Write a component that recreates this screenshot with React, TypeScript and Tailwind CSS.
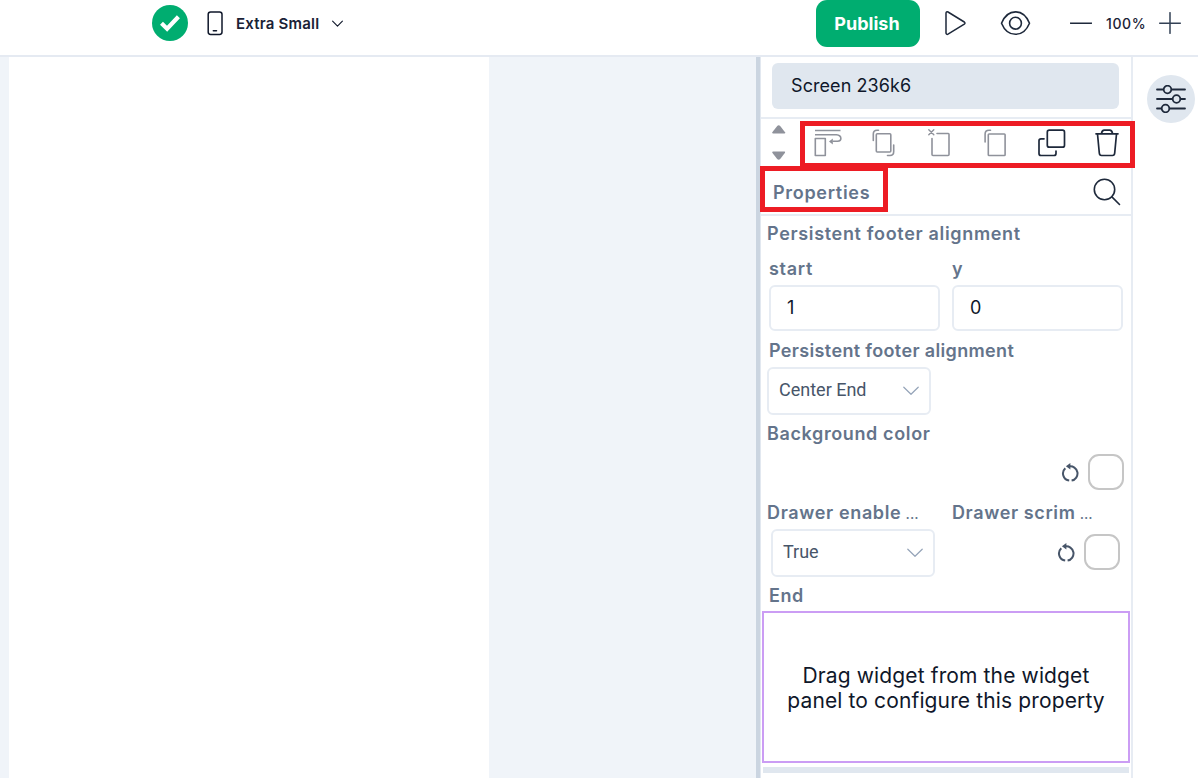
import React from "react";

type IconProps = { className?: string; children: React.ReactNode; w: number; h: number; sw?: number };

function Icon({ className = "", children, w, h, sw = 1.6 }: IconProps) {
  return (
    <svg
      className={`block shrink-0 ${className}`}
      width={w}
      height={h}
      viewBox={`0 0 ${w} ${h}`}
      fill="none"
      stroke="currentColor"
      strokeWidth={sw}
      strokeLinecap="round"
      strokeLinejoin="round"
    >
      {children}
    </svg>
  );
}

function Header() {
  return (
    <header className="flex h-[57px] shrink-0 items-start border-b-2 border-[#e5eaf2] bg-white">
      <div className="flex h-[55px] w-full items-start">
        <Icon w={36} h={36} className="mt-[5px] ml-[152px]">
          <circle cx="18" cy="18" r="18" fill="#00ad70" stroke="none" />
          <path d="M9.5 18.3l5.6 5.4L26.4 11.8" stroke="#fff" strokeWidth="4.2" strokeLinecap="butt" strokeLinejoin="miter" />
        </Icon>
        <Icon w={16} h={25} className="mt-[11px] ml-[19px] text-[#0f172a]" sw={1.5}>
          <rect x="1.2" y="0.9" width="13.8" height="22.6" rx="2.4" />
          <path d="M6.3 19.7h3.2" />
        </Icon>
        <span className="mt-[11px] ml-[13px] w-[84px] text-[15px] leading-[25px] font-semibold tracking-[0.2px] whitespace-nowrap text-[#1a2236]">
          Extra Small
        </span>
        <Icon w={12} h={8} className="mt-[20px] ml-[12px] text-[#0f172a]" sw={1.1}>
          <path d="M0.600 1.200l4.900 4.900L10.400 1.200" />
        </Icon>
        <button className="ml-[472px] h-[46.500px] w-[103.500px] rounded-[11px] bg-[#00ad70] pr-[1.500px] text-[18px] leading-[48px] font-bold whitespace-nowrap text-white">
          Publish
        </button>
        <Icon w={22} h={26} className="mt-[10px] ml-[24.500px] text-[#1e293b]" sw={1.5}>
          <path d="M2 3.200C2 2 3 1.400 4 2L20.300 12Q21.600 13.200 20.300 14.200L4 24.200C3 24.700 2 24.100 2 23Z" />
        </Icon>
        <Icon w={32} h={26} className="mt-[10px] ml-[34px] text-[#1e293b]" sw={1.6}>
          <path d="M1.500 13.200C4.300 6.500 9 1.900 15.500 1.900S26.700 6.500 29.500 13.200C26.700 20 22 24.300 15.500 24.300S4.300 20 1.500 13.200Z" />
          <circle cx="15.500" cy="13.200" r="5.900" />
        </Icon>
        <Icon w={22} h={22} className="mt-[12px] ml-[38px] text-[#1e293b]" sw={1.5}>
          <path d="M0.500 11.200h21" />
        </Icon>
        <span className="mt-[11px] ml-[14px] w-[40px] text-[14px] leading-[25px] font-medium tracking-[0.6px] whitespace-nowrap text-[#1a2236]">
          100%
        </span>
        <Icon w={22} h={22} className="mt-[12px] ml-[13px] text-[#334155]" sw={1.5}>
          <path d="M0.700 11.200h20.600M11 0.700v20.600" />
        </Icon>
      </div>
    </header>
  );
}

function Toolbar() {
  return (
    <div className="flex h-[48px] items-start text-[#8f929b]">
      <svg className="mt-[5px] ml-[11px] block shrink-0" width="14" height="37" viewBox="0 0 14 37" fill="currentColor">
        <path d="M0.300 8.200Q0 9.500 1.200 9.500H12.300Q13.600 9.500 13 8.200L8.200 2Q6.700 0.600 5.200 2Z" />
        <path d="M0.300 28.800Q0 27.500 1.200 27.500H12.300Q13.600 27.500 13 28.800L8.200 35Q6.700 36.400 5.200 35Z" />
      </svg>
      <Icon w={28} h={28} className="mt-[10px] ml-[28px]">
        <path d="M1 1.500H26.500M1 5.800H22.500C28.300 6.500 28 12 23.500 12.300H18.500" strokeLinecap="butt" />
        <path d="M18.800 9.500v6L15 12.400Z" fill="currentColor" stroke="none" />
        <rect x="1.300" y="9.500" width="10" height="17" />
      </Icon>
      <Icon w={24} h={28} className="mt-[10px] ml-[30px]">
        <path d="M6.500 1.200H5Q1.300 1.200 1.300 5V11.500" />
        <rect x="4.300" y="4.800" width="14.500" height="18.200" rx="1" />
        <path d="M21.700 16v6.500Q21.700 26.500 18 26.500H15.500" />
      </Icon>
      <Icon w={24} h={28} className="mt-[10px] ml-[32px]">
        <path d="M0.800 0.800l5 5M5.800 0.800l-5 5" strokeWidth="1.400" />
        <path d="M9 4.500H20.300Q21 4.500 21 5.500V25.500Q21 26.500 20 26.500H5Q4 26.500 4 25.500V9.500" />
      </Icon>
      <Icon w={24} h={28} className="mt-[10px] ml-[32px]">
        <path d="M6.500 1.200H5Q1.100 1.200 1.100 5V13" />
        <rect x="4.300" y="5" width="16.800" height="21.500" rx="0.800" />
      </Icon>
      <Icon w={28} h={28} className="mt-[10px] ml-[30px] text-[#1e293b]" sw={1.700}>
        <rect x="9.300" y="1.200" width="17.200" height="17" rx="2" />
        <path d="M6 9.800H3Q1 9.800 1 11.800V24.500Q1 26.500 3 26.500H16Q18 26.500 18 24.500V22" />
      </Icon>
      <Icon w={24} h={28} className="mt-[10px] ml-[29px] text-[#1e293b]" sw={1.700}>
        <path d="M1 4.800H23M2.500 5L4.300 24Q4.500 26.500 6.500 26.500H17.500Q19.500 26.500 19.700 24L21.500 5M6.500 4.500Q7 1.200 9.300 1.200H14.700Q17 1.200 17.500 4.500" />
      </Icon>
    </div>
  );
}

function Label({ className = "", children }: { className?: string; children: React.ReactNode }) {
  return (
    <span className={`block text-[18px] leading-[22px] font-semibold whitespace-nowrap text-[#64748b] ${className}`}>
      {children}
    </span>
  );
}

function NumberField({ label, value }: { label: string; value: string }) {
  return (
    <div className="w-[171px]">
      <Label className="tracking-[0.7px]">{label}</Label>
      <div className="mt-[5px] flex h-[46px] items-center rounded-[6px] border-2 border-[#e7ecf3] pl-[16px] text-[18px] leading-[22px] text-[#0f172a]">
        <span>{value}</span>
      </div>
    </div>
  );
}

function Select({ value, className = "" }: { value: string; className?: string }) {
  return (
    <div className={`flex h-[48px] w-[164px] items-start justify-between rounded-[6px] border-2 border-[#e7ecf3] pr-[10px] pl-[10px] ${className}`}>
      <span className="mt-[10px] font-[Roboto] text-[18px] leading-[22px] whitespace-nowrap text-[#475569]">{value}</span>
      <Icon w={16} h={10} className="mt-[17px] text-[#94a3b8]" sw={1.200}>
        <path d="M0.800 1.200L8 8.300L15.200 1.200" />
      </Icon>
    </div>
  );
}

function ColorPicker({ className = "" }: { className?: string }) {
  return (
    <div className={`flex h-[36px] items-center justify-end ${className}`}>
      <Icon w={18} h={20} className="mt-px text-[#475569]" sw={2}>
        <path d="M8 3.400A7.200 7.200 0 1 1 10.600 17.600M8.200 17.600A7.200 7.200 0 0 1 4.300 5.200" strokeLinecap="butt" />
        <path d="M4.900 3.300L9.400 0V6.600Z" fill="currentColor" stroke="none" />
      </Icon>
      <span className="ml-[9px] block size-[36px] rounded-[11px] border-2 border-[#c6c6c6] bg-white" />
    </div>
  );
}

function PropertiesPanel() {
  return (
    <aside className="flex w-[370px] shrink-0 flex-col overflow-hidden bg-white">
      <div className="h-[62px] border-b-2 border-[#e7ecf3] pt-[6px] pl-[11px]">
        <div className="h-[46px] w-[347px] rounded-[6px] bg-[#e0e7ef] pl-[19px] text-[18px] leading-[46px] tracking-[0.080px] text-[#0f172a]">
          Screen 236k6
        </div>
      </div>
      <Toolbar />
      <div className="flex h-[49px] items-start justify-between border-b-2 border-[#e7ecf3] pr-[10px] pl-[12px]">
        <Label className="mt-[15px] tracking-[0.700px]">Properties</Label>
        <Icon w={28} h={28} className="mt-[11px] text-[#1e293b]" sw={1.600}>
          <circle cx="11.500" cy="11.500" r="10.200" />
          <path d="M18.900 18.900L26.500 26.500" />
        </Icon>
      </div>
      <Label className="mt-[7px] ml-[6px] tracking-[0.670px]">Persistent footer alignment</Label>
      <div className="mt-[13px] ml-[8px] flex gap-[12px]">
        <NumberField label="start" value="1" />
        <NumberField label="y" value="0" />
      </div>
      <Label className="mt-[9px] ml-[8px] tracking-[0.350px]">Persistent footer alignment</Label>
      <Select value="Center End" className="mt-[5px] ml-[6px]" />
      <Label className="mt-[8px] ml-[6px] tracking-[0.620px]">Background color</Label>
      <ColorPicker className="mt-[9px] mr-[7px]" />
      <div className="mt-[12px] ml-[6px] flex">
        <Label className="w-[185px] tracking-[0.640px]">
          Drawer enable <span className="-ml-[1px] text-[15px] font-normal tracking-normal">...</span>
        </Label>
        <Label className="tracking-[0.620px]">
          Drawer scrim <span className="-ml-[1px] text-[15px] font-normal tracking-normal">...</span>
        </Label>
      </div>
      <div className="mt-[4px] flex items-start justify-between pr-[11px] pl-[10px]">
        <Select value="True" />
        <ColorPicker className="mt-[5px]" />
      </div>
      <Label className="mt-[8px] ml-[8px] tracking-[0.600px]">End</Label>
      <div className="mt-[4px] ml-[1px] flex h-[152px] w-[368px] items-center justify-center border-2 border-[#cb9df4] text-center text-[21px] leading-[25px] tracking-[0.130px] text-[#0f172a]">
        <p className="mt-[2px] whitespace-nowrap">
          Drag widget from the widget
          <br />
          panel to configure this property
        </p>
      </div>
      <div className="mt-[4px] ml-[2px] h-[6px] w-[366px] shrink-0 bg-[#e0e7ef]" />
    </aside>
  );
}

export default function App() {
  return (
    <div className="relative flex h-[778px] w-[1198px] flex-col overflow-hidden bg-white font-[Inter,sans-serif]">
      <Header />
      <div className="flex h-[721px]">
        <div className="w-[9px] bg-[#f0f4f9]" />
        <main className="w-[480px] bg-white" />
        <div className="w-[267px] bg-[#f0f4f9]" />
        <div className="w-[5px] border-r border-[#e2e8f0] bg-[#cbd5e1]" />
        <PropertiesPanel />
        <nav className="flex-1 border-l-2 border-[#e7ecf3] pt-[18px] pl-[14px]">
          <div className="flex size-[47.500px] items-center justify-center rounded-full bg-[#e0e7ef] text-[#1e293b]">
            <Icon w={30} h={28} sw={1.800}>
              <path d="M1 4.500H29M1 14H29M1 23.500H29" />
              <circle cx="11.500" cy="4.500" r="3.800" fill="#e0e7ef" />
              <circle cx="20.500" cy="14" r="3.800" fill="#e0e7ef" />
              <circle cx="9.500" cy="23.500" r="3.800" fill="#e0e7ef" />
            </Icon>
          </div>
        </nav>
      </div>
      <div className="pointer-events-none absolute top-[121px] left-[800px] h-[47px] w-[335px] border-[5px] border-[#ed1c24]" />
      <div className="pointer-events-none absolute top-[166px] left-[760px] h-[46px] w-[128px] border-[5px] border-[#ed1c24]" />
    </div>
  );
}
